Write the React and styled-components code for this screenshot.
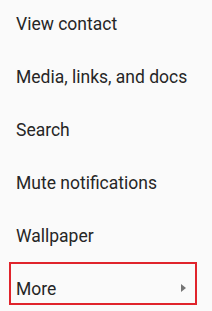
import styled, { createGlobalStyle } from "styled-components"

const Global = createGlobalStyle`
	html, body {
		margin: 0;
		padding: 0;
		background: #fafafa;
	}
	body {
		font-family: Roboto, "Noto Sans", sans-serif;
		-webkit-font-smoothing: antialiased;
	}
`

const Menu = styled.ul`
	list-style: none;
	margin: -3px 0 0;
	padding: 0;
	width: 212px;
	background: #fafafa;
`

const Row = styled.li`
	height: 53px;
	padding: 0 15px 0 9px;
	box-sizing: border-box;
`

const Item = styled.div`
	display: flex;
	align-items: flex-start;
	justify-content: space-between;
	height: 43px;
	box-sizing: border-box;
	padding: 14.5px 9px 0 5px;
	border: 2px solid ${p => (p.$active ? "#e0242c" : "transparent")};
	font-size: 17.5px;
	line-height: 20px;
	color: #262626;
	white-space: nowrap;
`

const Arrow = styled.span`
	width: 0;
	height: 0;
	margin-top: 5px;
	border-top: 4.5px solid transparent;
	border-bottom: 4.5px solid transparent;
	border-left: 5px solid #757575;
`

const items = [
	"View contact",
	"Media, links, and docs",
	"Search",
	"Mute notifications",
	"Wallpaper",
]

export default function App() {
	return (
		<>
			<Global />
			<Menu>
				{items.map(label => (
					<Row key={label}>
						<Item>{label}</Item>
					</Row>
				))}
				<Row>
					<Item $active>
						More
						<Arrow />
					</Item>
				</Row>
			</Menu>
		</>
	)
}
